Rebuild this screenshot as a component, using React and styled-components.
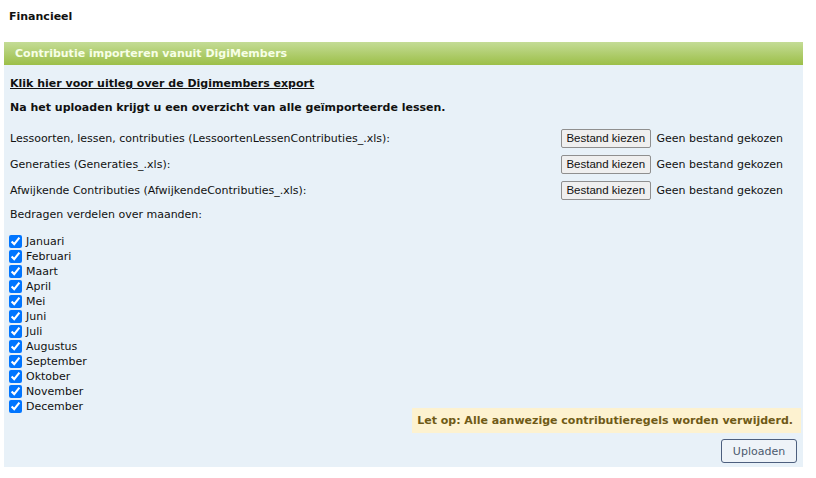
import React from "react";
import styled, { createGlobalStyle } from "styled-components";

const Global = createGlobalStyle`
  html, body { margin: 0; padding: 0; background: #fff; }
  body { font-family: "DejaVu Sans", Verdana, sans-serif; font-size: 11px; color: #111; }
`;

const Page = styled.div`
  padding: 4px 13px 0 4px;
`;

const Title = styled.h1`
  margin: 6px 0 0 5px;
  font-size: 11px;
  font-weight: bold;
  line-height: 14px;
  color: #111;
`;

const Panel = styled.section`
  margin-top: 18px;
  background: #e8f1f8;
`;

const PanelHeader = styled.div`
  height: 23px;
  display: flex;
  align-items: center;
  padding: 0 11px;
  background: linear-gradient(#c4dc96, #9cbf48);
  color: #f7ffe6;
  font-weight: bold;
  font-size: 11px;
`;

const PanelBody = styled.div`
  padding: 11px 0 4px 5px;
  display: flex;
  flex-direction: column;
`;

const Link = styled.a`
  color: #111;
  font-weight: bold;
  text-decoration: underline;
  line-height: 15px;
  margin-left: 1px;
`;

const Intro = styled.p`
  margin: 9px 0 0 1px;
  font-weight: bold;
  line-height: 15px;
`;

const FileRows = styled.div`
  margin-top: 13px;
  display: flex;
  flex-direction: column;
  gap: 6px;
`;

const FileRow = styled.div`
  display: grid;
  grid-template-columns: 1fr 222px;
  align-items: center;
  height: 20px;
  padding-left: 1px;
  padding-right: 20px;
`;

const FilePicker = styled.div`
  display: flex;
  align-items: center;
  gap: 6px;
`;

const ChooseButton = styled.button`
  font-family: "Liberation Sans", Arial, sans-serif;
  font-size: 11.5px;
  width: 90px;
  height: 19px;
  padding: 0;
  white-space: nowrap;
  background: #efefef;
  border: 1px solid #8f8f8f;
  border-radius: 2px;
  color: #111;
`;

const NoFile = styled.span`
  white-space: nowrap;
`;

const MonthsLabel = styled.div`
  margin-top: 7px;
  padding-left: 1px;
  line-height: 16px;
`;

const Months = styled.div`
  margin-top: 11px;
  display: flex;
  flex-direction: column;
`;

const Month = styled.label`
  display: flex;
  align-items: center;
  height: 15px;
  line-height: 15px;
`;

const Check = styled.input`
  width: 13px;
  height: 13px;
  margin: 0 4px 0 0;
  accent-color: #0075ff;
`;

const Footer = styled.div`
  margin-top: -6px;
  display: flex;
  flex-direction: column;
  align-items: flex-end;
  gap: 6px;
`;

const Warning = styled.div`
  width: 381px;
  height: 25px;
  margin-right: 2px;
  padding-right: 8px;
  display: flex;
  align-items: center;
  justify-content: flex-end;
  background: #fdf2d0;
  color: #6f5a17;
  font-weight: bold;
`;

const UploadButton = styled.button`
  margin-right: 6px;
  width: 76px;
  height: 24px;
  font-family: "DejaVu Sans", Verdana, sans-serif;
  font-size: 11px;
  color: #4c5a6e;
  background: #eef3f8;
  border: 1px solid #4d5f7e;
  border-radius: 3px;
`;

const files = [
  "Lessoorten, lessen, contributies (LessoortenLessenContributies_.xls):",
  "Generaties (Generaties_.xls):",
  "Afwijkende Contributies (AfwijkendeContributies_.xls):",
];

const months = [
  "Januari", "Februari", "Maart", "April", "Mei", "Juni", "Juli",
  "Augustus", "September", "Oktober", "November", "December",
];

export default function App() {
  return (
    <>
      <Global />
      <Page>
        <Title>Financieel</Title>
        <Panel>
          <PanelHeader>Contributie importeren vanuit DigiMembers</PanelHeader>
          <PanelBody>
            <div><Link href="#">Klik hier voor uitleg over de Digimembers export</Link></div>
            <Intro>Na het uploaden krijgt u een overzicht van alle geïmporteerde lessen.</Intro>
            <FileRows>
              {files.map((f) => (
                <FileRow key={f}>
                  <span>{f}</span>
                  <FilePicker>
                    <ChooseButton type="button">Bestand kiezen</ChooseButton>
                    <NoFile>Geen bestand gekozen</NoFile>
                  </FilePicker>
                </FileRow>
              ))}
            </FileRows>
            <MonthsLabel>Bedragen verdelen over maanden:</MonthsLabel>
            <Months>
              {months.map((m) => (
                <Month key={m}>
                  <Check type="checkbox" defaultChecked />
                  {m}
                </Month>
              ))}
            </Months>
            <Footer>
              <Warning>Let op: Alle aanwezige contributieregels worden verwijderd.</Warning>
              <UploadButton type="button">Uploaden</UploadButton>
            </Footer>
          </PanelBody>
        </Panel>
      </Page>
    </>
  );
}
